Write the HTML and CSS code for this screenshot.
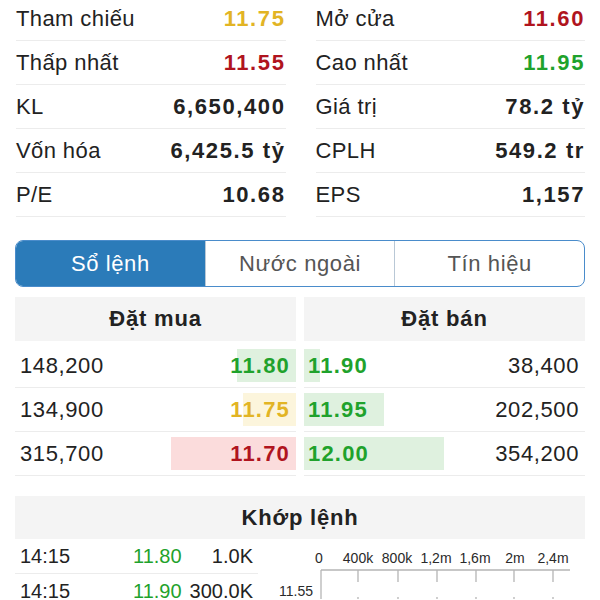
FILE: index.html
```html
<!DOCTYPE html>
<html>
<head>
  <title>Chi tiết mã</title>
  <link rel="stylesheet" href="styles.css">
</head>
<body>
  <div class="stats">
    <div class="col">
      <div class="row"><span>Tham chiếu</span><b class="ref">11.75</b></div>
      <div class="row"><span>Thấp nhất</span><b class="down">11.55</b></div>
      <div class="row"><span>KL</span><b>6,650,400</b></div>
      <div class="row"><span>Vốn hóa</span><b>6,425.5 tỷ</b></div>
      <div class="row"><span>P/E</span><b>10.68</b></div>
    </div>
    <div class="col">
      <div class="row"><span>Mở cửa</span><b class="down">11.60</b></div>
      <div class="row"><span>Cao nhất</span><b class="up">11.95</b></div>
      <div class="row"><span>Giá trị</span><b>78.2 tỷ</b></div>
      <div class="row"><span>CPLH</span><b>549.2 tr</b></div>
      <div class="row"><span>EPS</span><b>1,157</b></div>
    </div>
  </div>

  <div class="tabs">
    <div class="tab active">Sổ lệnh</div>
    <div class="tab">Nước ngoài</div>
    <div class="tab">Tín hiệu</div>
  </div>

  <div class="book">
    <div class="side">
      <div class="head">Đặt mua</div>
      <div class="order buy"><span class="bar up-bg" style="width: 59px"></span><span>148,200</span><b class="up">11.80</b></div>
      <div class="order buy"><span class="bar ref-bg" style="width: 53px"></span><span>134,900</span><b class="ref">11.75</b></div>
      <div class="order buy"><span class="bar down-bg" style="width: 125px"></span><span>315,700</span><b class="down">11.70</b></div>
    </div>
    <div class="side">
      <div class="head">Đặt bán</div>
      <div class="order sell"><span class="bar up-bg" style="width: 16px"></span><b class="up">11.90</b><span>38,400</span></div>
      <div class="order sell"><span class="bar up-bg" style="width: 80px"></span><b class="up">11.95</b><span>202,500</span></div>
      <div class="order sell"><span class="bar up-bg" style="width: 140px"></span><b class="up">12.00</b><span>354,200</span></div>
    </div>
  </div>

  <div class="matched">
    <div class="head">Khớp lệnh</div>
    <div class="matched-body">
      <div class="trades">
        <div class="trade"><span>14:15</span><span class="up">11.80</span><span class="vol">1.0K</span></div>
        <div class="trade"><span>14:15</span><span class="up">11.90</span><span class="vol">300.0K</span></div>
      </div>
      <div class="chart">
        <svg width="308" height="60" viewBox="0 0 308 60">
          <g font-size="14" fill="#2a2a2a" text-anchor="middle">
            <text x="42" y="24">0</text>
            <text x="81" y="24">400k</text>
            <text x="120" y="24">800k</text>
            <text x="159" y="24">1,2m</text>
            <text x="198" y="24">1,6m</text>
            <text x="238" y="24">2m</text>
            <text x="276" y="24">2,4m</text>
            <text x="36" y="57" text-anchor="end">11.55</text>
          </g>
          <g stroke="#b5b5b5" stroke-width="1.3" fill="none">
            <path d="M44 31 H293" />
            <path d="M44 31 V60" />
            <path d="M81 31 V43 M121 31 V43 M160 31 V43 M199 31 V43 M237 31 V43 M276 31 V43" />
            <path d="M81 58 V60 M121 58 V60 M160 58 V60 M199 58 V60 M237 58 V60 M276 58 V60" />
          </g>
        </svg>
      </div>
    </div>
  </div>
</body>
</html>
```

FILE: styles.css
```css
:root {
  --text: #222;
  --line: #ececec;
  --panel: #f4f4f4;
  --up: #1fa22c;
  --down: #b0141e;
  --ref: #e2b424;
  --blue: #2b7bb9;
  --font: "Liberation Sans", Arial, sans-serif;
}
body {
  margin: 0;
  padding: 0 15px;
  font-family: var(--font);
  color: var(--text);
  background: white;
  overflow: hidden;
}
.stats {
  display: grid;
  grid-template-columns: 1fr 1fr;
  gap: 30px;
  margin-top: -3px;
  padding-left: 1px;
}
.row {
  display: flex;
  justify-content: space-between;
  align-items: center;
  height: 43px;
  border-bottom: 1px solid var(--line);
  font-size: 22px;
}
.row span {
  letter-spacing: 0.4px;
}
.row b {
  letter-spacing: 1.6px;
}
.up { color: var(--up); }
.down { color: var(--down); }
.ref { color: var(--ref); }
.up-bg { background: #dff1df; }
.down-bg { background: #fbdcdc; }
.ref-bg { background: #fcf5dc; }

.tabs {
  display: flex;
  margin-top: 23px;
  height: 45px;
  border: 1.5px solid #4a8ccb;
  border-radius: 8px;
  overflow: hidden;
}
.tab {
  flex: 1;
  display: flex;
  align-items: center;
  justify-content: center;
  font-size: 22px;
  letter-spacing: 0.6px;
  color: #555;
  border-left: 1px solid #b9c8d6;
}
.tab:first-child {
  border-left: none;
}
.tab.active {
  background: var(--blue);
  color: white;
}

.book {
  display: flex;
  gap: 8px;
  margin-top: 10px;
}
.side {
  flex: 1;
}
.head {
  height: 44px;
  display: flex;
  align-items: center;
  justify-content: center;
  background: var(--panel);
  font-size: 22px;
  font-weight: bold;
  letter-spacing: 0.8px;
}
.side .head {
  margin-bottom: 3px;
}
.order {
  position: relative;
  display: flex;
  justify-content: space-between;
  align-items: center;
  height: 43px;
  border-bottom: 1px solid var(--line);
  font-size: 22px;
}
.order span, .order b {
  position: relative;
  letter-spacing: 0.6px;
}
.order b {
  letter-spacing: 1.2px;
}
.order.buy {
  padding: 0 6px 0 5px;
}
.order.sell {
  padding: 0 6px 0 4px;
}
.order .bar {
  position: absolute;
  top: 5px;
  bottom: 5px;
}
.order.buy .bar {
  right: 0;
}
.order.sell .bar {
  left: 0;
}

.matched {
  margin-top: 20px;
}
.matched .head {
  height: 43px;
}
.matched-body {
  display: flex;
}
.trades {
  width: 243px;
}
.trade {
  display: flex;
  align-items: center;
  height: 33px;
  padding: 1px 5px 0;
  border-bottom: 1px solid var(--line);
  font-size: 20px;
}
.trade span:first-child {
  width: 113px;
}
.trade .vol {
  margin-left: auto;
}
.chart {
  margin-left: 19px;
  flex: none;
}
.chart svg {
  display: block;
  font-family: var(--font);
}
```
